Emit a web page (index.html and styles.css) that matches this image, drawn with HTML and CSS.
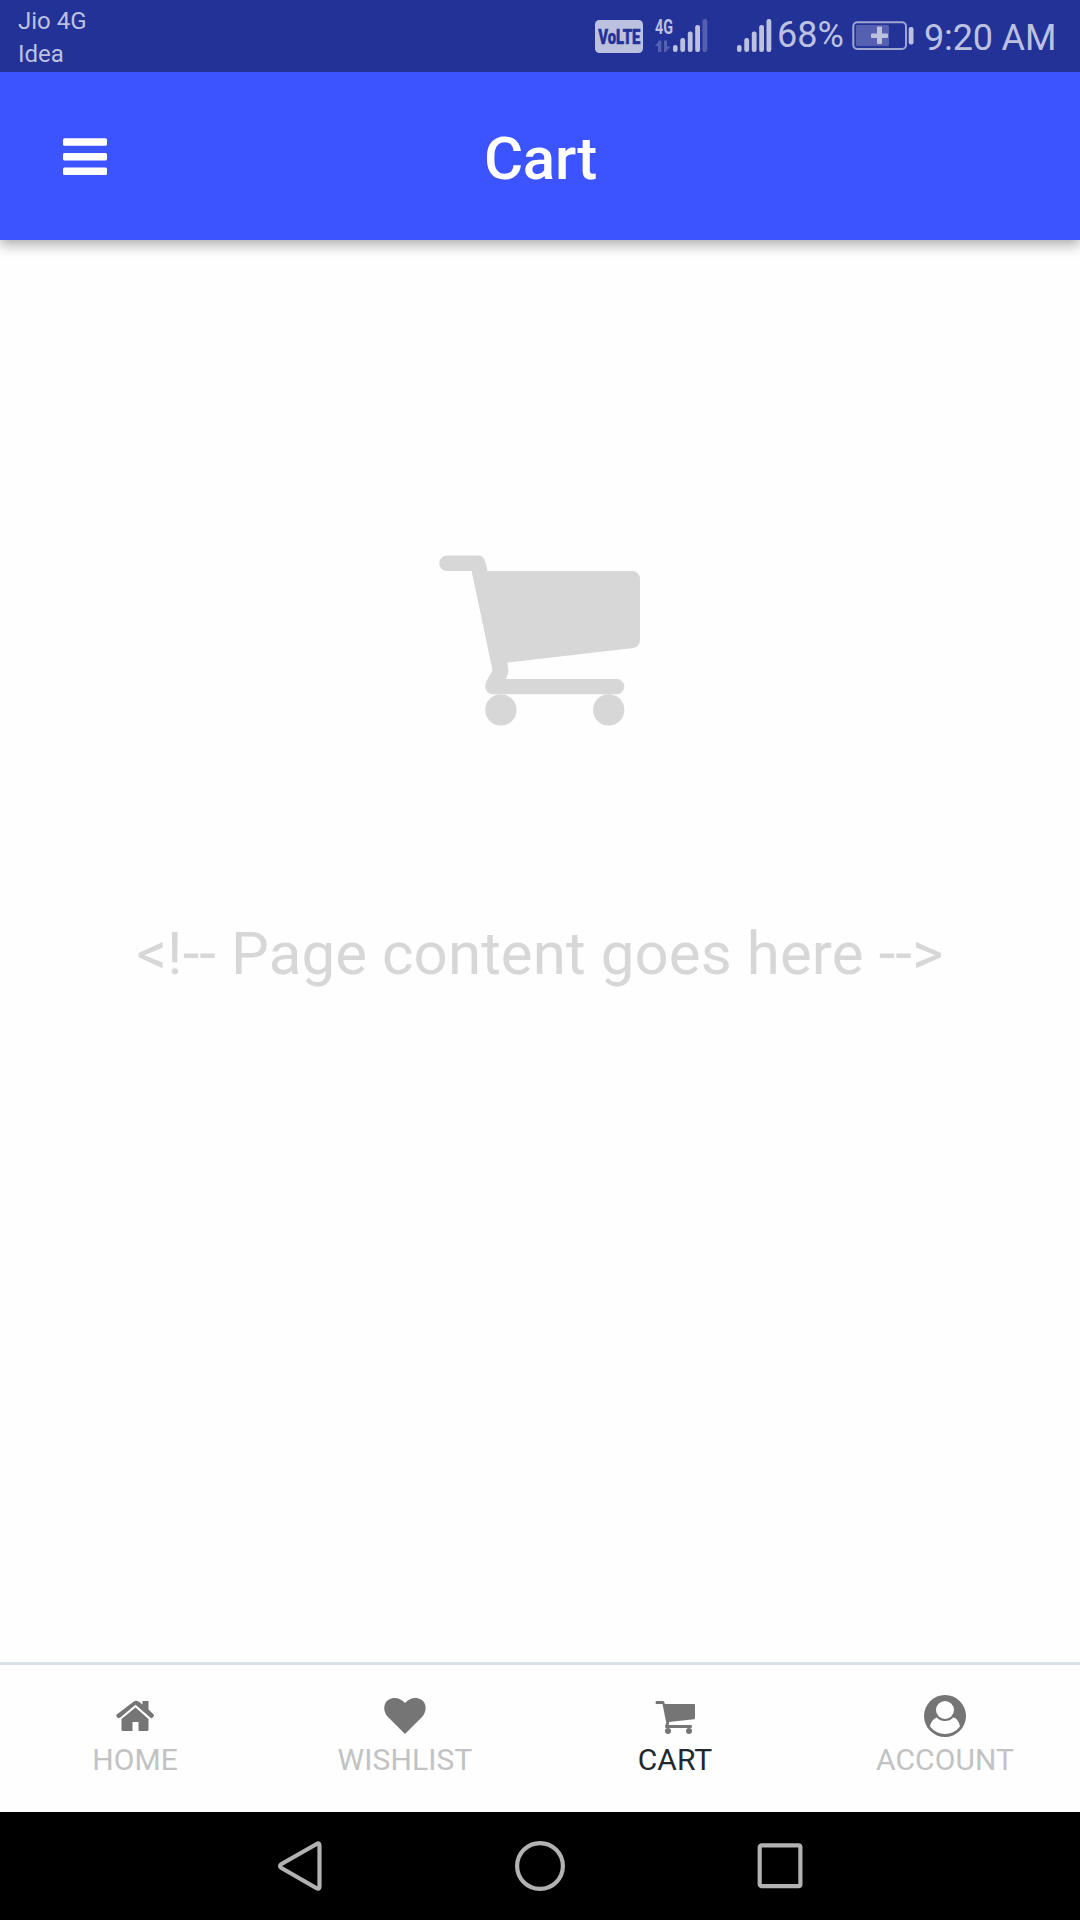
FILE: index.html
```html
<!DOCTYPE html>
<html lang="en">
<head>
<meta charset="utf-8">
<title>Cart</title>
<link rel="stylesheet" href="styles.css">
</head>
<body>
<div class="status-bar">
  <div class="carriers"><span>Jio 4G</span><span>Idea</span></div>
  <div class="indicators">
    <svg class="volte" viewBox="0 0 48 33"><rect width="48" height="33" rx="4.5"/><text x="3.3" y="24.2" textLength="42" lengthAdjust="spacingAndGlyphs">VoLTE</text></svg>
    <svg class="signal-data" viewBox="0 0 53 34">
      <text x="0" y="14.500" textLength="18" lengthAdjust="spacingAndGlyphs">4G</text>
      <path class="dim" d="M0 27l4.300-5.500h2V33H3v-6zM9 21.500h3v6h3.500L10.500 33H9z"/>
      <rect x="18" y="26" width="4.600" height="7" rx="2.200"/><rect x="25.300" y="19" width="4.800" height="14" rx="2.200"/><rect x="32.800" y="12.500" width="4.800" height="20.500" rx="2.200"/><rect x="40.200" y="6" width="4.800" height="27" rx="2.200"/><rect class="dim" x="47.500" y="0" width="4.800" height="33" rx="2.200"/>
    </svg>
    <svg class="signal" viewBox="0 0 35 34"><rect x="0" y="26" width="4.600" height="7" rx="2.200"/><rect x="7.300" y="19" width="4.800" height="14" rx="2.200"/><rect x="14.800" y="12.500" width="4.800" height="20.500" rx="2.200"/><rect x="22.200" y="6" width="4.800" height="27" rx="2.200"/><rect x="29.500" y="0" width="4.800" height="33" rx="2.200"/></svg>
    <span class="percent">68%</span>
    <svg class="battery" viewBox="0 0 62 30"><rect class="case" x="1.300" y="1.300" width="52.700" height="26.700" rx="4"/><rect class="dim" x="4" y="4" width="33" height="21" rx="1.500"/><path d="M25 6.500a1 1 0 0 1 1-1h3a1 1 0 0 1 1 1v6h5a1 1 0 0 1 1 1v2.500a1 1 0 0 1-1 1h-5v5a1 1 0 0 1-1 1h-3a1 1 0 0 1-1-1v-5h-5a1 1 0 0 1-1-1v-2.500a1 1 0 0 1 1-1h5z"/><rect x="56.700" y="6" width="4.800" height="17.500" rx="2"/></svg>
    <span class="clock">9:20 AM</span>
  </div>
</div>
<header class="app-bar">
  <svg class="menu" viewBox="0 0 44 37"><rect y="0.300" width="44" height="7.500" rx="1.500"/><rect y="15" width="44" height="7.500" rx="1.500"/><rect y="29.400" width="44" height="7.500" rx="1.500"/></svg>
  <h1>Cart</h1>
</header>
<main>
  <svg class="empty-cart" viewBox="56 75 604 513"><path d="M80 76H175Q190 77 195 95L202 123H637A23 23 0 0 1 660 146V330Q659 350 640 354L261 398L265 422Q265 428 257 447H590A23 23 0 0 1 590 493H218Q195 492 195 467C196 456 211 432 217 422L154 123H80A23.500 23.500 0 0 1 80 76Z"/><circle cx="242" cy="540" r="47"/><circle cx="566" cy="540" r="47"/></svg>
  <p>&lt;!-- Page content goes here --&gt;</p>
</main>
<nav class="tabs">
  <a class="tab"><svg class="icon" viewBox="-1.500 0 42 42"><path d="M2.200 22.800L1 21.500Q.3 20.500 1.200 19.600L18 6.700Q20.800 4.800 23.500 6.700L27 9.600V6H33V14.500L38.200 19.600Q39 20.500 38.200 21.300L37 22.800Q36 23.500 35 22.700L20 9.800L4.500 22.700Q3.300 23.600 2.200 22.800Z"/><path d="M6 24L20 12.500L33 24V34.500Q33 36 31.500 36H23V27H17V36H7.500Q6 36 6 34.500Z"/></svg><span>HOME</span></a>
  <a class="tab"><svg class="icon" viewBox="0 0 42 42"><path d="M21 39L3.500 21.500C-3 13 1 3 11 3Q16 3 21 8Q26 3 31 3C41 3 45 13 38.500 21.500Z"/></svg><span>WISHLIST</span></a>
  <a class="tab active"><svg class="icon" viewBox="0 0 42 42"><path d="M2.500 6H9Q10 6 10.400 7.500L10.800 9H40Q41 9 41 10V23Q41 24 40 24.200L15 27L15.200 28L14.500 30H37Q38 30 38 31.500T37 33H12.500Q11 33 11 31.500Q11 30.500 12.300 28L8.500 9H2.500Q1.500 9 1.500 7.500T2.500 6Z"/><circle cx="14" cy="36" r="3"/><circle cx="35" cy="36" r="3"/></svg><span>CART</span></a>
  <a class="tab"><svg class="icon" viewBox="0 0 42 42"><circle cx="21" cy="21" r="21"/><circle class="cutout" cx="21" cy="15" r="9"/><path class="cutout" d="M12.700 22.500Q16 26 21 26T29.300 22.500Q34 23 36 31.500Q30 39 21 39T6 31.500Q7 25 12.700 22.500Z"/></svg><span>ACCOUNT</span></a>
</nav>
<div class="system-nav">
  <svg viewBox="0 0 50 50"><path d="M41.200 3.200Q44.500 1 44.500 4.500V45.500Q44.500 49 41.200 47L6.500 27Q3.500 25 6.500 23Z"/></svg>
  <svg viewBox="0 0 50 50"><circle cx="25" cy="25" r="22.900"/></svg>
  <svg viewBox="0 0 50 50"><rect x="4.700" y="4.300" width="40.700" height="40.900" rx="2"/></svg>
</div>
</body>
</html>
```
FILE: styles.css
```css
* { box-sizing: border-box; }
body {
  margin: 0;
  width: 1080px;
  height: 1920px;
  display: flex;
  flex-direction: column;
  overflow: hidden;
  background: #fefefe;
  font-family: Roboto, sans-serif;
}
svg { display: block; flex: none; overflow: visible; }
.status-bar {
  position: relative;
  z-index: 1;
  height: 72px;
  display: flex;
  justify-content: space-between;
  background: #233297;
  color: #bdc1e0;
  fill: #bdc1e0;
}
.carriers {
  display: flex;
  flex-direction: column;
  padding: 5px 0 0 18px;
  font-size: 24px;
  line-height: 33px;
}
.indicators { display: flex; width: 485px; font-size: 36px; white-space: nowrap; }
.indicators text { font-weight: 700; }
.volte { width: 48px; height: 33px; margin-top: 20px; }
.volte text { font-size: 21px; font-weight: 900; fill: #233297; stroke: #233297; stroke-width: 0.5px; }
.signal-data { width: 53px; height: 34px; margin: 19px 0 0 12px; }
.signal-data text { font-size: 20px; }
.signal { width: 35px; height: 34px; margin: 19px 0 0 29px; }
.dim { fill: #5660b0; }
.percent { width: 75px; padding-left: 5px; line-height: 71px; }
.battery { width: 62px; height: 30px; margin: 21px 0 0 5px; }
.case { fill: none; stroke: #a0a6d2; stroke-width: 2px; }
.clock { padding-left: 10px; line-height: 77px; letter-spacing: -0.15px; }
.app-bar {
  height: 168px;
  display: grid;
  grid-template-columns: 170px 1fr 170px;
  align-items: center;
  background: #3c54ff;
  color: #fff;
  box-shadow: 0 5px 12px rgba(0, 0, 0, 0.32);
}
.menu { width: 44px; height: 37px; margin-left: 63px; fill: #fff; }
.app-bar h1 {
  margin: 0;
  font-size: 60px;
  font-weight: 500;
  line-height: 70px;
  text-align: center;
  letter-spacing: -0.3px;
  padding: 5px 0 0 1px;
}
main {
  flex: 1;
  display: flex;
  flex-direction: column;
  align-items: center;
  padding-top: 315px;
  color: #d7d7d7;
}
.empty-cart { width: 201px; height: 171px; margin-right: 2px; fill: #d7d7d7; }
main p { margin: 193px 0 0; font-size: 60px; line-height: 70px; letter-spacing: 0.1px; white-space: nowrap; }
.tabs {
  height: 150px;
  display: grid;
  grid-template-columns: repeat(4, 1fr);
  border-top: 3px solid #dae1e8;
  background: #fefefe;
}
.tab {
  display: flex;
  flex-direction: column;
  align-items: center;
  padding-top: 30px;
  font-size: 30px;
  line-height: 36px;
  letter-spacing: 0.1px;
  color: #c2c2c2;
}
.icon { width: 42px; height: 42px; margin-bottom: 5px; fill: #757575; }
.cutout { fill: #fefefe; }
.active { color: #202a2e; }
.system-nav {
  height: 108px;
  display: flex;
  justify-content: center;
  align-items: center;
  gap: 190px;
  background: #000;
}
.system-nav svg { width: 50px; height: 50px; fill: none; stroke: #b2b2b2; stroke-width: 4.2px; }
```
